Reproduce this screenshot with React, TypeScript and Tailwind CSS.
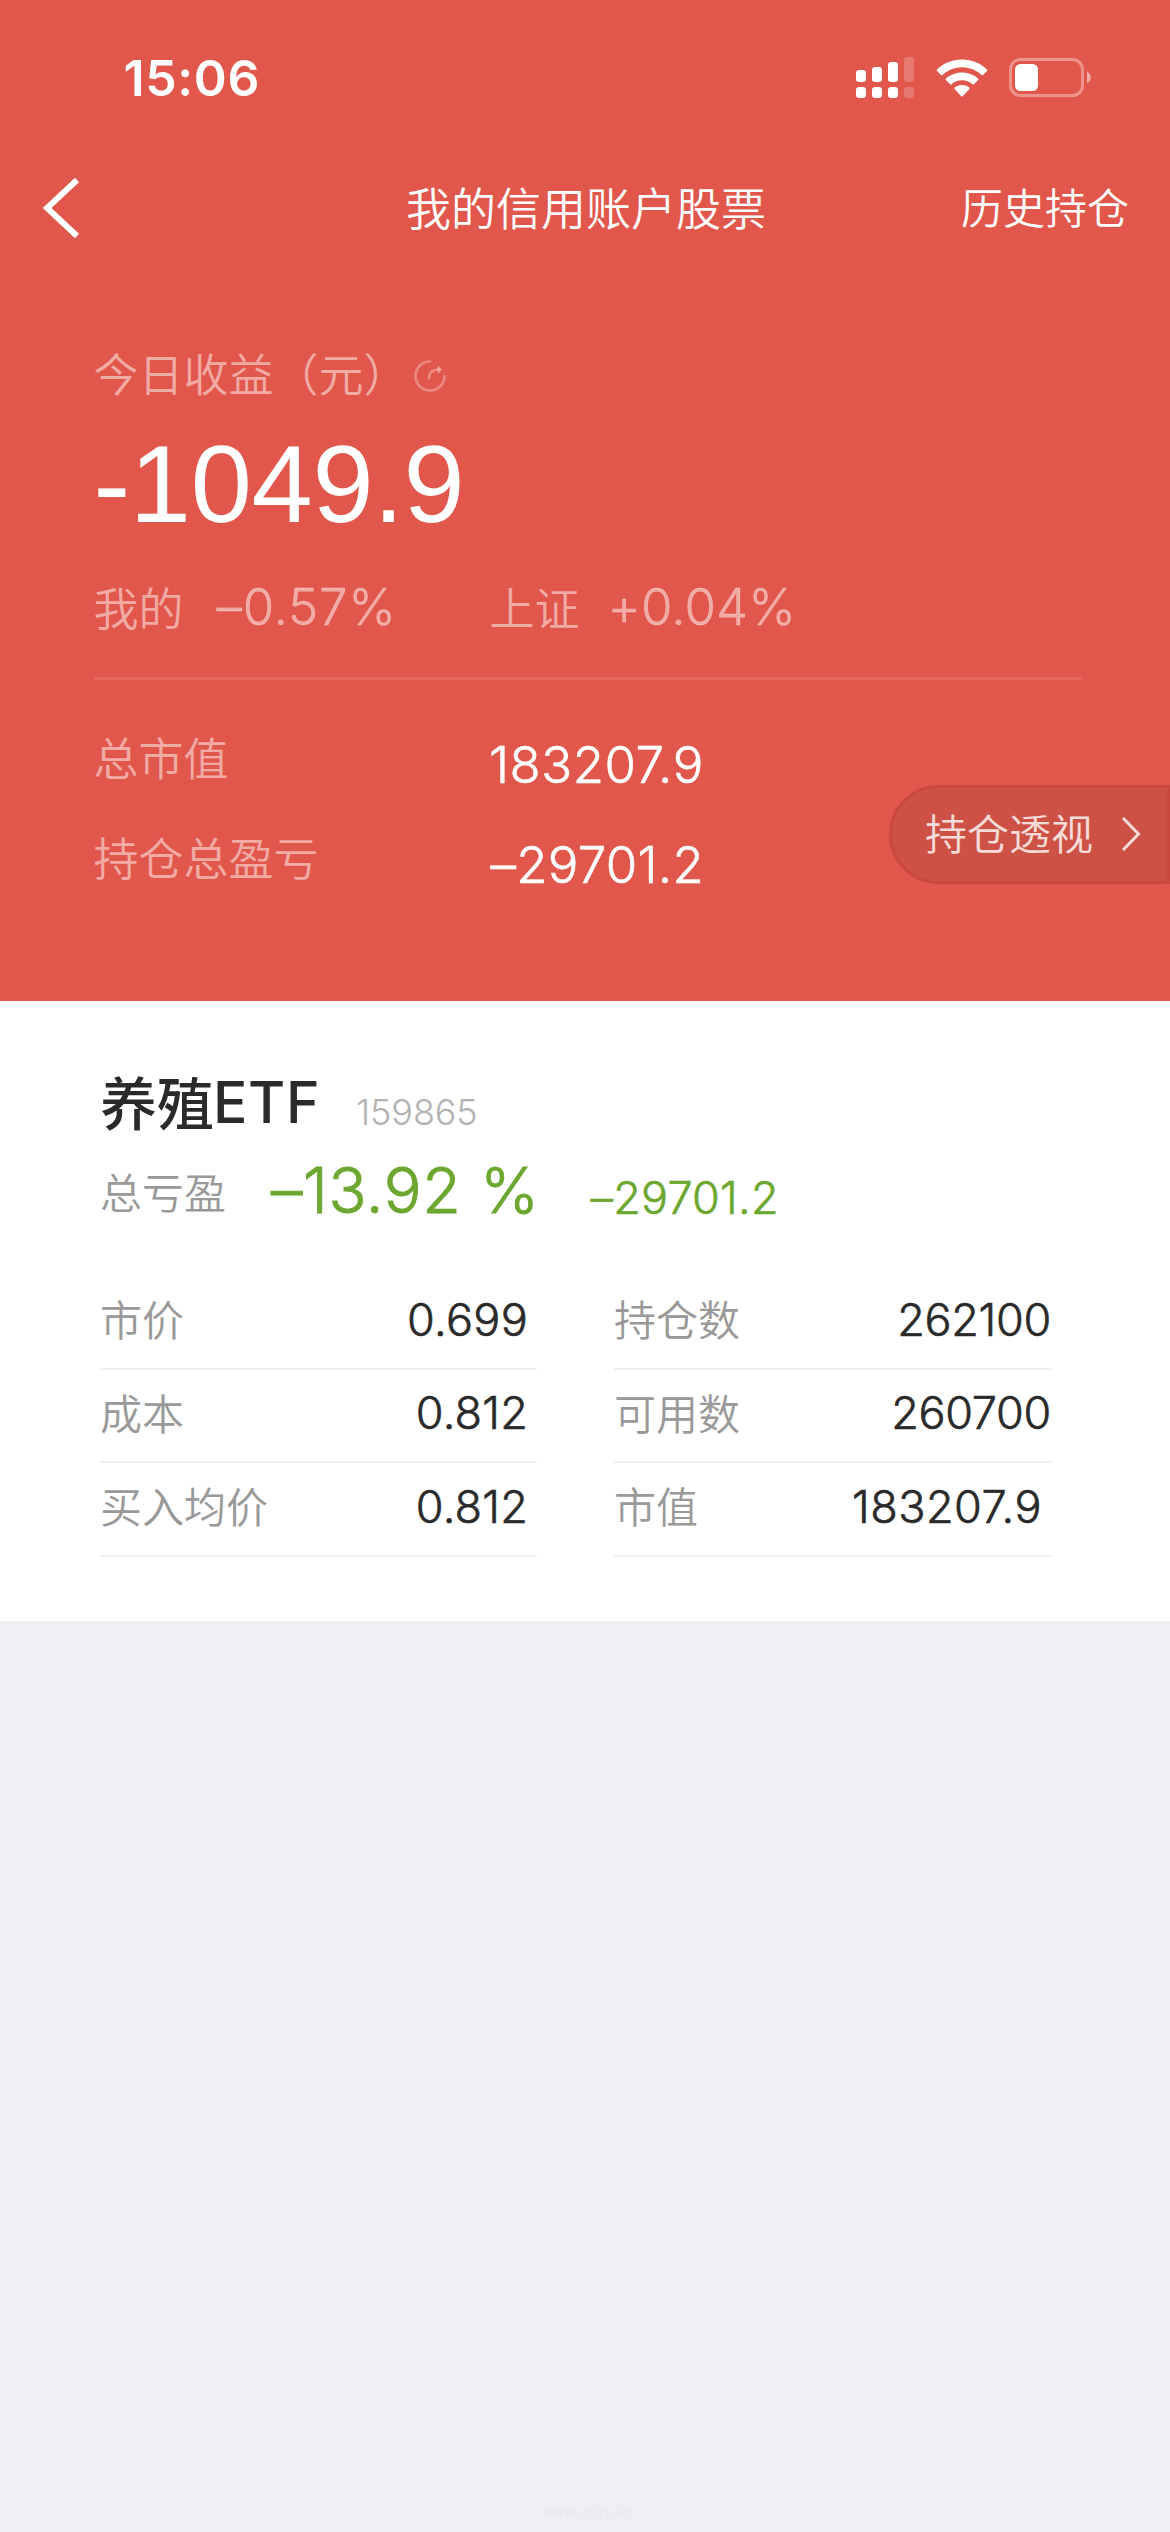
import React from "react";

const cjk = "font-['Noto_Sans_CJK_SC',sans-serif] leading-none whitespace-nowrap pb-[0.08em]";
const num = "font-['Inter',sans-serif] leading-none whitespace-nowrap";

function SignalIcon() {
  const bars = [
    { x: 0, y: 13, h: 12, o: 1 },
    { x: 16, y: 10, h: 15, o: 1 },
    { x: 32, y: 5, h: 20, o: 1 },
    { x: 48, y: 0, h: 25, o: 0.2 },
  ];
  return (
    <svg className="h-[41px] w-[58px] shrink-0" viewBox="0 0 58 41" fill="#fff">
      {bars.map((b) => (
        <g key={b.x} opacity={b.o}>
          <rect x={b.x} y={b.y} width="10" height={b.h} rx="3.2" />
          <rect x={b.x} y="30" width="10" height="11" rx="3.2" />
        </g>
      ))}
    </svg>
  );
}

function WifiIcon() {
  return (
    <svg className="h-[38px] w-[52px] shrink-0" viewBox="0 0 52 38" fill="#fff">
      <path d="M26 0.5C35.6 0.5 44.6 4.2 51 10.6Q51.6 11.3 51 12L47 16Q46.3 16.6 45.6 16A28.5 28.5 0 0 0 6.4 16Q5.7 16.6 5 16L1 12Q0.4 11.3 1 10.6C7.4 4.2 16.4 0.5 26 0.5Z" />
      <path d="M26 13.5C32.2 13.5 37.9 15.8 42.2 19.7Q42.8 20.4 42.2 21.1L38 25.2Q37.3 25.8 36.6 25.2A16.3 16.3 0 0 0 15.4 25.2Q14.7 25.8 14 25.2L9.8 21.1Q9.2 20.4 9.8 19.7C14.1 15.8 19.8 13.5 26 13.5Z" />
      <path d="M26 26C28.9 26 31.5 27 33.4 28.7Q34 29.4 33.4 30.1L26.7 37.2Q26 37.9 25.3 37.2L18.6 30.1Q18 29.4 18.6 28.7C20.5 27 23.1 26 26 26Z" />
    </svg>
  );
}

function BatteryIcon() {
  return (
    <svg className="h-[39px] w-[83px] shrink-0" viewBox="0 0 83 39">
      <rect x="1.5" y="1.5" width="72" height="36" rx="10" fill="none" stroke="#fff" strokeOpacity="0.36" strokeWidth="3" />
      <rect x="6" y="6" width="23" height="27" rx="5.5" fill="#fff" />
      <path d="M78 13.5C83 16 83 23 78 25.5Z" fill="#fff" fillOpacity="0.5" />
    </svg>
  );
}

function RefreshIcon() {
  return (
    <svg className="h-[32px] w-[32px] shrink-0" viewBox="0 0 32 32" fill="none" stroke="#fff" strokeOpacity="0.3" strokeWidth="2.6" strokeLinecap="round">
      <path d="M16 1.5A14.5 14.5 0 1 0 30.5 16" />
      <path d="M15 18.5C15 13 17.5 9.5 25 9.5" />
      <path d="M24 6.5L27.5 9.5L24.5 13Z" fill="#fff" fillOpacity="0.3" strokeWidth="1" />
    </svg>
  );
}

function Row({ label, value, valueClass }: { label: string; value: string; valueClass: string }) {
  return (
    <div className="flex h-[93.5px] items-center justify-between border-b-2 border-[#f0f0f0] pb-[4px]">
      <span className={`${cjk} text-[42px] font-[350] text-[#999]`}>{label}</span>
      <span className={`${num} mb-[1px] text-[45px] font-[300] text-[#2a2a2a] [-webkit-text-stroke:0.6px] ${valueClass}`}>{value}</span>
    </div>
  );
}

export default function App() {
  return (
    <div className="flex h-[2532px] w-[1170px] flex-col overflow-hidden bg-[#efeef3]">
      <header className="flex h-[1001px] flex-col bg-[#e2574c] text-white">
        <div className="flex h-[155px] items-center pr-[78px] pl-[123.5px]">
          <span className={`${num} mt-[1px] text-[50px] font-[600] tracking-[0.6px]`}>15:06</span>
          <div className="ml-auto flex items-center">
            <SignalIcon />
            <div className="ml-[22px]"><WifiIcon /></div>
            <div className="ml-[21px]"><BatteryIcon /></div>
          </div>
        </div>

        <nav className="grid h-[106px] grid-cols-[1fr_auto_1fr] items-center pr-[41px] pl-[43px]">
          <svg className="h-[60px] w-[37px]" viewBox="0 0 37 60" fill="none" stroke="#fff" strokeWidth="6">
            <path d="M34 2L4 30L34 58" />
          </svg>
          <h1 className={`${cjk} text-[45px] font-[350]`}>我的信用账户股票</h1>
          <span className={`${cjk} justify-self-end text-[42px] font-[350]`}>历史持仓</span>
        </nav>

        <section className="flex flex-col pl-[93.5px]">
          <div className="mt-[89px] flex h-[48px] items-center text-white/50">
            <span className={`${cjk} text-[45px] font-[350]`}>今日收益（元）</span>
            <div className="mt-[4px] ml-[5px]"><RefreshIcon /></div>
          </div>
          <div className="mt-[32px] flex h-[108px] items-center font-['Liberation_Sans',Arial,sans-serif] text-[110px] leading-none tracking-[-0.3px]">-1049.9</div>
          <div className="mt-[45px] flex h-[48px] items-center text-white/50">
            <span className={`${cjk} mt-[2px] text-[45px] font-[350]`}>我的</span>
            <span className={`${num} mb-[2px] ml-[33px] w-[180px] text-[51px] font-[300] tracking-[0.7px] [-webkit-text-stroke:0.3px]`}>–0.57%</span>
            <span className={`${cjk} mt-[2px] ml-[93px] text-[45px] font-[350]`}>上证</span>
            <span className={`${num} mb-[2px] ml-[28px] text-[51px] font-[300] tracking-[0.1px] [-webkit-text-stroke:0.3px]`}>+0.04%</span>
          </div>
          <div className="mt-[46px] ml-[0.5px] h-[3px] w-[989px] bg-white/10" />
        </section>

        <section className="flex items-start justify-between pt-[48px] pl-[93.5px]">
          <div className="grid grid-cols-[395.5px_auto]">
            <span className={`${cjk} flex h-[60px] items-center text-[45px] font-[350] text-white/50`}>总市值</span>
            <span className={`${num} mt-[6px] flex h-[60px] items-center text-[51px] font-[300] tracking-[0.5px] [-webkit-text-stroke:0.6px]`}>183207.9</span>
            <span className={`${cjk} mt-[34px] flex h-[60px] items-center text-[45px] font-[350] text-white/50`}>持仓总盈亏</span>
            <span className={`${num} mt-[40px] flex h-[60px] items-center pl-[1.5px] text-[51px] font-[300] tracking-[0.25px] [-webkit-text-stroke:0.6px]`}>–29701.2</span>
          </div>
          <button className="mt-[57px] flex h-[99px] w-[281px] items-center rounded-l-[50px] border-[3px] border-[#c9493f] bg-[#cd5145] pb-[2px] pl-[33px] text-white/80">
            <span className={`${cjk} text-[42px] font-[350]`}>持仓透视</span>
            <svg className="ml-[28px] h-[34px] w-[22px]" viewBox="0 0 22 34" fill="none" stroke="currentColor" strokeWidth="3">
              <path d="M2 1L17.5 17L2 33" />
            </svg>
          </button>
        </section>
      </header>

      <main className="flex h-[620px] flex-col bg-white pt-[66px] pl-[100px]">
        <div className="flex h-[70px] items-center">
          <h2 className={`${cjk} mt-[2px] text-[57px] font-[500] text-[#2a2a2a]`}>养殖</h2>
          <span className={`${num} ml-[-1px] w-[143px] text-[57px] font-[500] tracking-[0.7px] text-[#2a2a2a]`}>ETF</span>
          <span className={`${num} mt-[20px] text-[36px] font-[300] tracking-[-0.1px] text-[#b2b2b2]`}>159865</span>
        </div>
        <div className="mt-[18px] flex h-[70px] items-center text-[#6ca730]">
          <span className={`${cjk} mt-[5px] w-[171px] text-[42px] font-[350] text-[#999]`}>总亏盈</span>
          <span className={`${num} w-[319.5px] text-[63px] font-[300] tracking-[0.6px] [-webkit-text-stroke:0.9px]`}>–13.92 %</span>
          <span className={`${num} mt-[15px] text-[45px] font-[300] tracking-[0.2px] [-webkit-text-stroke:0.6px]`}>–29701.2</span>
        </div>
        <div className="mt-[51px] grid grid-cols-[437px_437px] gap-x-[77px]">
          <Row label="市价" value="0.699" valueClass="pr-[9px] tracking-[0.3px]" />
          <Row label="持仓数" value="262100" valueClass="tracking-[-0.3px]" />
          <Row label="成本" value="0.812" valueClass="pr-[9px] tracking-[0.2px]" />
          <Row label="可用数" value="260700" valueClass="tracking-[-0.3px]" />
          <Row label="买入均价" value="0.812" valueClass="pr-[9px] tracking-[0.2px]" />
          <Row label="市值" value="183207.9" valueClass="pr-[9px] tracking-[0.5px]" />
        </div>
      </main>

      <footer className="mt-auto flex h-[32px] justify-center pl-[4px] font-['Open_Sans',sans-serif] text-[15px] leading-[22px] text-[#eaeaec]">www.ddrj.vip</footer>
    </div>
  );
}
